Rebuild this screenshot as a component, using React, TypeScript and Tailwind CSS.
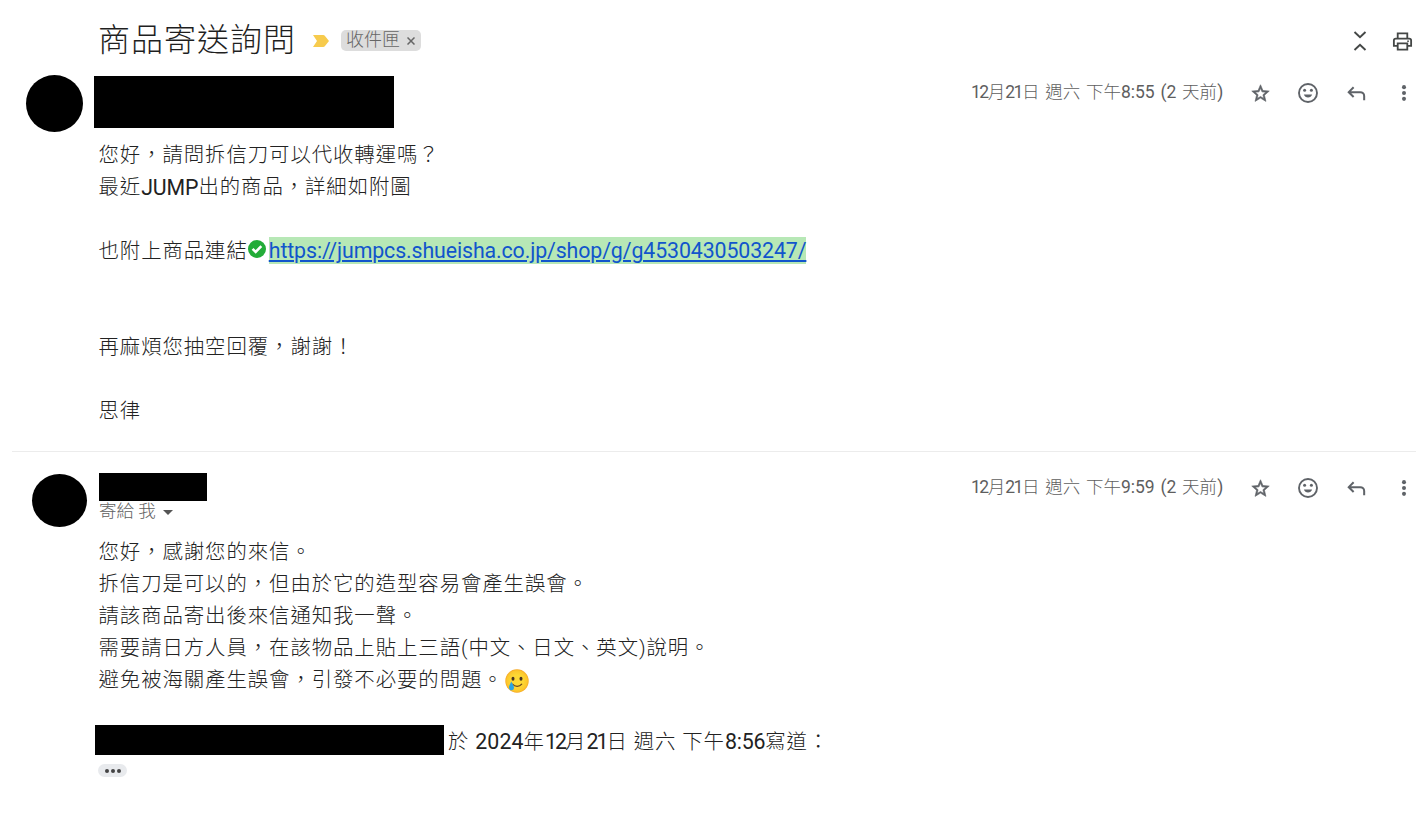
import type { ReactNode } from "react";

function Collapse() {
  return (
    <svg viewBox="0 0 14 20" className="h-5 w-3.5" fill="none" stroke="#444746" strokeWidth="1.9">
      <path d="M1.5 1 7 6.3 12.5 1M1.5 19 7 13.7 12.5 19" />
    </svg>
  );
}

function Print() {
  return (
    <svg viewBox="0 0 24 24" className="size-[23px]" fill="none" stroke="#444746" strokeWidth="1.9">
      <path d="M7 8V3.5h10V8M7 16.5H3V11q0-2 2-2h14q2 0 2 2v5.5h-4" />
      <path d="M7 14h10v6.5H7z" />
      <circle cx="17.8" cy="11.7" r="0.9" fill="#444746" stroke="none" />
    </svg>
  );
}

function Star() {
  return (
    <svg viewBox="0 0 24 24" className="mt-px ml-[1.5px] size-[21px]" fill="#5f6368" stroke="#5f6368" strokeWidth="0.7">
      <path d="M22 9.24l-7.19-.62L12 2 9.19 8.63 2 9.24l5.46 4.73L5.82 21 12 17.27 18.18 21l-1.63-7.03L22 9.24zM12 15.4l-3.76 2.27 1-4.28-3.32-2.88 4.38-.38L12 6.1l1.71 4.04 4.38.38-3.32 2.88 1 4.28L12 15.4z" />
    </svg>
  );
}

function Smile() {
  return (
    <svg viewBox="0 0 24 24" className="size-6">
      <circle cx="12" cy="12" r="9" fill="none" stroke="#5f6368" strokeWidth="1.9" />
      <circle cx="8.6" cy="9.3" r="1.5" fill="#5f6368" />
      <circle cx="15.4" cy="9.3" r="1.5" fill="#5f6368" />
      <path d="M7.9 13.6h8.2c-.6 1.8-2.1 3-4.1 3s-3.5-1.2-4.1-3z" fill="#5f6368" />
    </svg>
  );
}

function Reply() {
  return (
    <svg viewBox="0 0 24 24" className="ml-px size-[23px]" fill="none" stroke="#5f6368" strokeWidth="2.1">
      <path d="M9 5.5 3.9 10.6 9 15.7M4.2 10.6H16a4 4 0 0 1 4 4V19" />
    </svg>
  );
}

function More() {
  return (
    <svg viewBox="0 0 24 24" className="ml-px size-[22px]" fill="#5f6368">
      <circle cx="12" cy="5.6" r="2.2" />
      <circle cx="12" cy="12" r="2.2" />
      <circle cx="12" cy="18.4" r="2.2" />
    </svg>
  );
}

function Check() {
  return (
    <svg viewBox="0 0 18 18" className="mt-[-6px] mr-[3px] size-[18px] shrink-0">
      <circle cx="9" cy="9" r="9" fill="#22ac38" />
      <path d="M4.6 8.8 7.7 12l5.6-5.8" fill="none" stroke="#fff" strokeWidth="2.6" />
    </svg>
  );
}

function TearfulSmile() {
  return (
    <svg viewBox="0 0 24 24" className="ml-px size-6 shrink-0">
      <defs>
        <radialGradient id="face">
          <stop offset="0.5" stopColor="#fdd835" />
          <stop offset="0.88" stopColor="#fcc62c" />
          <stop offset="1" stopColor="#f5a623" />
        </radialGradient>
      </defs>
      <circle cx="12" cy="12" r="11.7" fill="url(#face)" />
      <ellipse cx="8" cy="9.7" rx="1.5" ry="2" fill="#493421" />
      <ellipse cx="16" cy="9.7" rx="1.5" ry="2" fill="#493421" />
      <path d="M7.5 15.2c2.5 2.9 6.9 2.9 9.2 0" fill="none" stroke="#6b4620" strokeWidth="1.3" strokeLinecap="round" />
      <path d="M6.3 12.5c-1 2.4-2.5 4-2.3 6.2.2 1.6 1.3 2.6 2.6 2.6 1.5 0 2.5-1.2 2.4-2.8-.1-2.1-1.9-3.7-2.7-6z" fill="#2ba4e3" />
    </svg>
  );
}

function Meta({ time }: { time: string }) {
  return (
    <div className="flex h-6 items-center text-[#5e5e5e]">
      <span className="mt-[-1px] mr-[25px] w-[252px] text-[17.5px] [word-spacing:1.5px] whitespace-pre">
        <span className="font-normal tracking-[-0.085em]">12</span>月
        <span className="font-normal tracking-[-0.085em]">21</span>日 週六 下午
        <span className="font-normal">{time} (2</span> 天前<span className="font-normal">)</span>
      </span>
      <div className="grid grid-cols-[48px_48px_48px_24px] items-center">
        <Star />
        <Smile />
        <Reply />
        <More />
      </div>
    </div>
  );
}

function Line({ children }: { children?: ReactNode }) {
  return <div className="flex h-8 items-center pt-[3px] tracking-[0.93px] whitespace-pre">{children}</div>;
}

export default function App() {
  return (
    <main
      lang="zh-TW"
      className="h-[817px] w-[1423px] overflow-hidden bg-white font-['Roboto','Noto_Sans_CJK_TC',sans-serif] text-[20.4px] font-light text-[#222]"
    >
      <header className="flex h-[75px] items-start pl-[98px]">
        <h1 className="mt-[15px] text-[32px] leading-[50px] font-light tracking-[1px] text-[#1f1f1f]">商品寄送詢問</h1>
        <svg viewBox="0 0 16 12" className="mt-[35px] ml-[17px] h-3 w-4" fill="#f7cb4d">
          <path d="M0 0h10.2q1 0 1.6.8L16 6l-4.2 5.2q-.6.8-1.6.8H0l4-6z" />
        </svg>
        <span className="mt-[30px] ml-3 flex h-[21px] w-20 items-center rounded-[5px] bg-[#ddd] pl-[5px] text-[18px] leading-[21px] text-[#666]">
          <span className="mt-[-3px]">收件匣</span>
          <svg viewBox="0 0 8 8" className="mt-px ml-[7px] size-2" fill="none" stroke="#666" strokeWidth="1.5">
            <path d="m.5.5 7 7m0-7-7 7" />
          </svg>
        </span>
        <div className="mt-[30px] mr-[9px] ml-auto flex h-[22px] items-center gap-[24.5px]">
          <Collapse />
          <Print />
        </div>
      </header>

      <section>
        <div className="flex h-[63px] items-start pl-[26px]">
          <div className="size-[57px] rounded-full bg-black" />
          <div className="mt-px ml-[11px] h-[52px] w-[300px] bg-black" />
          <div className="mt-[6px] mr-[7px] ml-auto">
            <Meta time="8:55" />
          </div>
        </div>
        <div className="h-[313px] pl-[98.5px]">
          <Line>您好，請問拆信刀可以代收轉運嗎？</Line>
          <Line>
            最近<span className="text-[21.33px] font-normal tracking-[-0.1px]">JUMP</span>出的商品，詳細如附圖
          </Line>
          <Line />
          <Line>
            也附上商品連結
            <Check />
            <a
              href="https://jumpcs.shueisha.co.jp/shop/g/g4530430503247/"
              className="mt-[-3px] h-[27px] bg-[#b7e8b6] text-[21.33px] leading-[27px] font-normal tracking-[-0.11px] text-[#1155cc] underline decoration-2 underline-offset-2"
            >
              https://jumpcs.shueisha.co.jp/shop/g/g4530430503247/
            </a>
          </Line>
          <Line />
          <Line />
          <Line>再麻煩您抽空回覆，謝謝！</Line>
          <Line />
          <Line>思律</Line>
        </div>
      </section>

      <section className="mr-[7px] ml-3 border-t border-[#ececec]">
        <div className="flex h-[83px] items-start pt-[21px] pl-5">
          <div className="mt-px h-[53px] w-[55px] rounded-[50%] bg-black" />
          <div className="ml-3">
            <div className="h-7 w-[108px] bg-black" />
            <div className="flex h-[20px] items-center text-[17.5px] text-[#5e5e5e]">
              寄給 我
              <svg viewBox="0 0 10 5" className="mt-[2px] ml-[7px] h-[5px] w-[10px]" fill="#555">
                <path d="M0 0h10L5 5z" />
              </svg>
            </div>
          </div>
          <div className="mt-[3px] ml-auto">
            <Meta time="9:59" />
          </div>
        </div>
        <div className="pl-[86.5px]">
          <Line>您好，感謝您的來信。</Line>
          <Line>拆信刀是可以的，但由於它的造型容易會產生誤會。</Line>
          <Line>請該商品寄出後來信通知我一聲。</Line>
          <Line>需要請日方人員，在該物品上貼上三語(中文、日文、英文)說明。</Line>
          <Line>
            避免被海關產生誤會，引發不必要的問題。
            <TearfulSmile />
          </Line>
        </div>
        <div className="mt-[30px] flex h-[30px] items-center pl-[83px]">
          <div className="mr-[4px] h-[30px] w-[349px] bg-black" />
          <p className="mt-[3px] tracking-[0.93px] whitespace-pre">
            於 <span className="text-[21.33px] font-normal tracking-[0.1px]">2024</span>年
            <span className="text-[21.33px] font-normal tracking-[-0.09em]">12</span>月
            <span className="text-[21.33px] font-normal tracking-[-0.09em]">21</span>日 週六 下午
            <span className="text-[21.33px] font-normal tracking-[-0.2px]">8:56</span>寫道：
          </p>
        </div>
        <div className="mt-[9px] ml-[86px] flex h-[13px] w-[29px] items-center justify-center gap-[2px] rounded-full bg-[#e8eaed]">
          <i className="size-1 rounded-full bg-[#444]" />
          <i className="size-1 rounded-full bg-[#444]" />
          <i className="size-1 rounded-full bg-[#444]" />
        </div>
      </section>
    </main>
  );
}
